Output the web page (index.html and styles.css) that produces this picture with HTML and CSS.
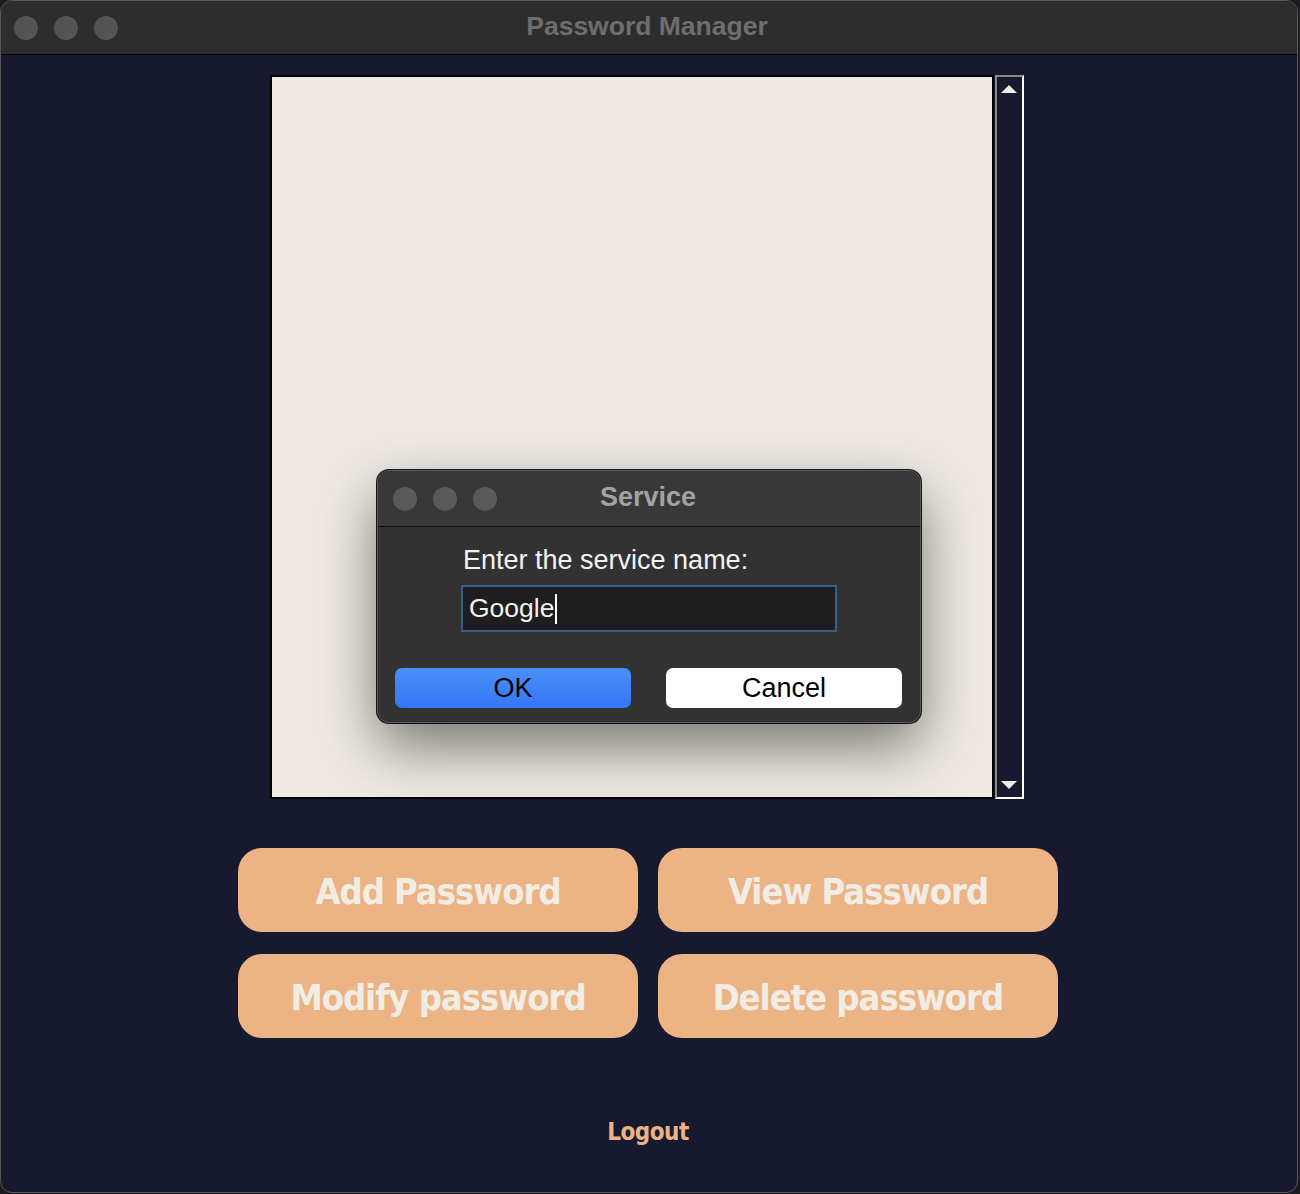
FILE: index.html
```
<!DOCTYPE html>
<html>
<head>
<meta charset="utf-8">
<link rel="stylesheet" href="styles.css">
</head>
<body>
<div class="window">
  <div class="titlebar">
    <div class="lights"><span class="light"></span><span class="light"></span><span class="light"></span></div>
    <div class="title">Password Manager</div>
  </div>
  <div class="content">
    <div class="listarea">
      <div class="listbox"></div>
      <div class="scrollbar">
        <svg class="arrow" width="18" height="10" viewBox="0 0 18 10"><polygon points="1,9 9,1 17,9" fill="#efebe4"/></svg>
        <svg class="arrow" width="18" height="10" viewBox="0 0 18 10"><polygon points="1,1 9,9 17,1" fill="#efebe4"/></svg>
      </div>
    </div>
    <div class="buttons">
      <div class="btn">Add Password</div>
      <div class="btn">View Password</div>
      <div class="btn">Modify password</div>
      <div class="btn">Delete password</div>
    </div>
    <div class="logout">Logout</div>
  </div>
  <div class="dialog">
    <div class="dtitlebar">
      <div class="dlights"><span class="dlight"></span><span class="dlight"></span><span class="dlight"></span></div>
      <div class="dtitle">Service</div>
    </div>
    <div class="dbody">
      <div class="dlabel">Enter the service name:</div>
      <div class="dinput"><span>Google</span><span class="caret"></span></div>
      <div class="dbuttons">
        <div class="dbtn ok">OK</div>
        <div class="dbtn cancel">Cancel</div>
      </div>
    </div>
  </div>
</div>
</body>
</html>
```
FILE: styles.css
```
* { box-sizing: border-box; }
html, body { margin: 0; padding: 0; }
body {
  background: #1d1d1f;
  width: 1300px;
  height: 1194px;
  overflow: hidden;
  font-family: "Liberation Sans", Arial, sans-serif;
}
.window {
  position: relative;
  width: 1298px;
  height: 1193px;
  background: #171a2f;
  border: 1px solid #58585c;
  border-radius: 12px;
  overflow: hidden;
}
.titlebar {
  position: relative;
  height: 54px;
  background: #2d2d2d;
  border-bottom: 1px solid #000;
  display: flex;
  align-items: center;
}
.lights {
  display: flex;
  gap: 16px;
  padding-left: 13px;
}
.light {
  width: 24px;
  height: 24px;
  border-radius: 50%;
  background: #545454;
}
.title {
  position: absolute;
  left: 0;
  right: 0;
  top: 0;
  height: 53px;
  line-height: 50px;
  text-align: center;
  color: #6e6e6e;
  font-weight: bold;
  font-size: 26.5px;
  padding-right: 4px;
}
.content {
  display: flex;
  flex-direction: column;
  align-items: center;
  padding-top: 20px;
}
.listarea {
  display: flex;
  gap: 1px;
  margin-left: -5px;
}
.listbox {
  width: 724px;
  height: 724px;
  background: #efebe4;
  border: 2px solid #000;
}
.scrollbar {
  width: 29px;
  height: 724px;
  border-top: 2px solid #8a8a8a;
  border-left: 2px solid #8a8a8a;
  border-right: 2px solid #fff;
  border-bottom: 2px solid #fff;
  display: flex;
  flex-direction: column;
  justify-content: space-between;
  align-items: center;
  padding: 7px 0 7px;
}
.arrow { display: block; }
.buttons {
  margin-top: 49px;
  display: grid;
  grid-template-columns: 400px 400px;
  column-gap: 20px;
  row-gap: 22px;
  margin-left: -2px;
}
.btn {
  height: 84px;
  border-radius: 24px;
  background: #ecb384;
  color: #f1ede5;
  font-family: "DejaVu Sans Condensed", "DejaVu Sans", sans-serif;
  font-size: 36px;
  font-weight: bold;
  display: flex;
  align-items: center;
  justify-content: center;
  letter-spacing: -1px;
  padding-top: 2px;
}
.logout {
  margin-top: 80px;
  color: #ecb384;
  font-family: "DejaVu Sans Condensed", "DejaVu Sans", sans-serif;
  font-weight: bold;
  font-size: 24px;
  letter-spacing: -0.5px;
  margin-left: -2px;
}
.dialog {
  position: absolute;
  left: 376px;
  top: 469px;
  width: 544px;
  height: 253px;
  border-radius: 12px;
  border: 1px solid #5b5b5b;
  background: #323232;
  overflow: hidden;
  box-shadow: 0 24px 60px rgba(0,0,0,0.5), 0 0 0 1px #1a1a1a;
}
.dtitlebar {
  position: relative;
  height: 56px;
  background: #383838;
  border-bottom: 1px solid #111;
  display: flex;
  align-items: center;
}
.dlights {
  display: flex;
  gap: 16px;
  padding-left: 15px;
}
.dlight {
  width: 24px;
  height: 24px;
  border-radius: 50%;
  background: #5a5a5a;
}
.dtitle {
  position: absolute;
  left: 0; right: 0; top: 0;
  height: 55px;
  line-height: 53px;
  text-align: center;
  color: #a2a2a2;
  font-weight: bold;
  font-size: 27px;
  padding-right: 2px;
}
.dbody {
  padding: 18px 18px 0 17px;
}
.dlabel {
  color: #f2f2f2;
  font-size: 27px;
  line-height: 30px;
  padding-left: 68px;
}
.dinput {
  margin-top: 10px;
  margin-left: 66px;
  width: 376px;
  height: 47px;
  background: #1e1e1e;
  border: 2px solid #3b5d8a;
  color: #f2f2f2;
  font-size: 26.5px;
  display: flex;
  align-items: center;
  padding-left: 6px;
}
.caret {
  display: inline-block;
  width: 2px;
  height: 30px;
  background: #fff;
  margin-left: 1px;
}
.dbuttons {
  margin-top: 36px;
  display: flex;
  justify-content: space-between;
}
.dbtn {
  width: 236px;
  height: 40px;
  border-radius: 7px;
  font-size: 27px;
  display: flex;
  align-items: center;
  justify-content: center;
  color: #000;
}
.ok {
  background: linear-gradient(#4b8ff7, #3476f5);
}
.cancel {
  background: #fff;
}
```
